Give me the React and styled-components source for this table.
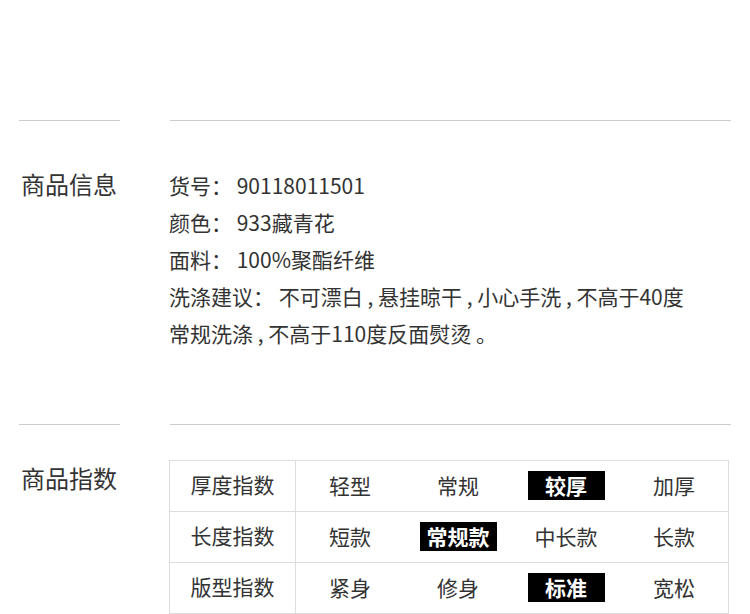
import React from 'react'
import styled, { createGlobalStyle } from 'styled-components'

const info = [
    ['货号：', '90118011501'],
    ['颜色：', '933藏青花'],
    ['面料：', '100%聚酯纤维'],
    ['洗涤建议：', '不可漂白 , 悬挂晾干 , 小心手洗 , 不高于40度'],
]

const indexes = [
    { name: '厚度指数', options: ['轻型', '常规', '较厚', '加厚'], active: 2 },
    { name: '长度指数', options: ['短款', '常规款', '中长款', '长款'], active: 1 },
    { name: '版型指数', options: ['紧身', '修身', '标准', '宽松'], active: 2 },
]

function App() {
    return (
        <>
            <GlobalStyle />
            <Page>
                <Section>
                    <Divider>
                        <LeftLine />
                        <RightLine />
                    </Divider>
                    <Body $gap={48}>
                        <Heading $shift={-3}>商品信息</Heading>
                        <Details>
                            {info.map(([k, v]) => (
                                <Line key={k}>{k} {v}</Line>
                            ))}
                            <Line>常规洗涤 , 不高于110度反面熨烫 。</Line>
                        </Details>
                    </Body>
                </Section>
                <Section>
                    <Divider>
                        <LeftLine />
                        <RightLine />
                    </Divider>
                    <Body $gap={36}>
                        <Heading $shift={-1}>商品指数</Heading>
                        <Table>
                            <tbody>
                                {indexes.map(row => (
                                    <tr key={row.name}>
                                        <NameCell>{row.name}</NameCell>
                                        {row.options.map((o, i) => (
                                            <Cell key={o}>
                                                <Tag $active={i === row.active}>{o}</Tag>
                                            </Cell>
                                        ))}
                                    </tr>
                                ))}
                            </tbody>
                        </Table>
                    </Body>
                </Section>
            </Page>
        </>
    )
}

export default App

const GlobalStyle = createGlobalStyle`
    body {
        margin: 0;
        background: #ffffff;
        font-family: "Noto Sans CJK SC", "Noto Sans", sans-serif;
        color: #333333;
    }
`
const Page = styled.div`
    width: 750px;
    height: 614px;
    overflow: hidden;
    padding-top: 120px;
    box-sizing: border-box;
`
const Section = styled.div`
    margin-bottom: 72px;
`
const Divider = styled.div`
    display: flex;
    align-items: flex-start;
`
const LeftLine = styled.div`
    margin-left: 19px;
    width: 101px;
    height: 1px;
    background: #cccccc;
`
const RightLine = styled.div`
    margin-left: 50px;
    width: 561px;
    height: 1px;
    background: #cccccc;
`
const Body = styled.div`
    display: flex;
    margin-top: ${p => p.$gap - 1}px;
`
const Heading = styled.h2`
    margin: ${p => p.$shift}px 0 0 21px;
    width: 148px;
    font-size: 24px;
    font-weight: 400;
    line-height: 37px;
    color: #333333;
`
const Details = styled.div`
    font-size: 21px;
    line-height: 37px;
    margin-top: -1px;
`
const Line = styled.div`
    white-space: pre;
`
const Table = styled.table`
    border-collapse: collapse;
    font-size: 21px;
    color: #333333;
`
const NameCell = styled.td`
    width: 125px;
    height: 46px;
    padding: 0 0 4px;
    border: 1px solid #dddddd;
    text-align: center;
`
const Cell = styled.td`
    width: 108px;
    height: 46px;
    padding: 0 0 4px;
    text-align: center;
    border-top: 1px solid #dddddd;
    border-bottom: 1px solid #dddddd;
    &:last-child {
        border-right: 1px solid #dddddd;
    }
`
const Tag = styled.span`
    display: inline-block;
    vertical-align: middle;
    width: 77px;
    height: 29px;
    line-height: 29px;
    background: ${p => (p.$active ? '#000000' : 'transparent')};
    color: ${p => (p.$active ? '#ffffff' : '#333333')};
    font-weight: ${p => (p.$active ? 700 : 400)};
`
